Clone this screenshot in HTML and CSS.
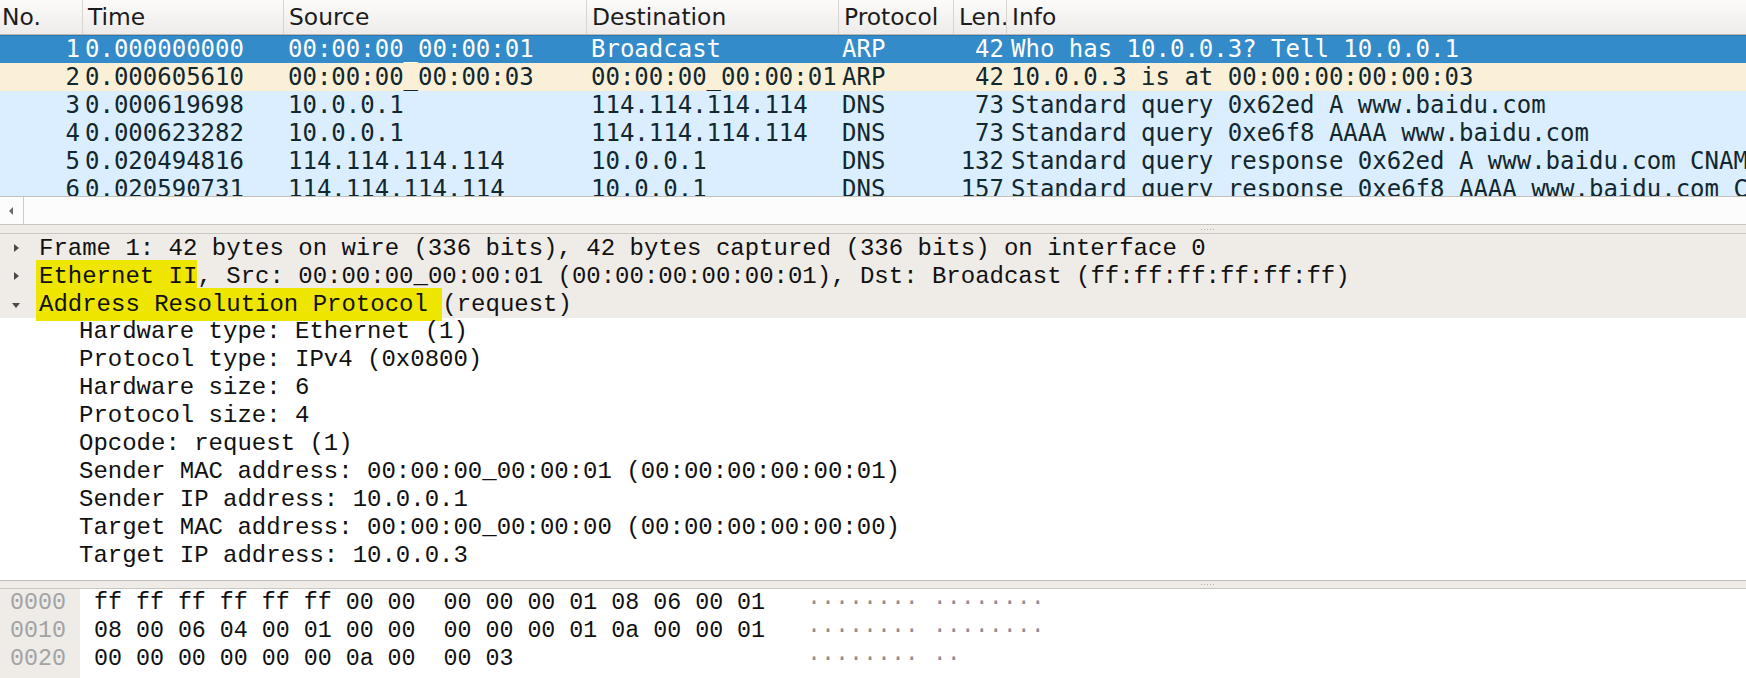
FILE: index.html
```html
<!DOCTYPE html>
<html>
<head>
<meta charset="utf-8">
<link rel="stylesheet" href="styles.css">
</head>
<body>
<div class="app">
  <div class="list">
    <div class="hdr">
      <div class="c c-no">No.</div>
      <div class="c c-time">Time</div>
      <div class="c c-src">Source</div>
      <div class="c c-dst">Destination</div>
      <div class="c c-proto">Protocol</div>
      <div class="c c-len">Len…</div>
      <div class="c c-info">Info</div>
    </div>
    <div class="row sel">
      <div class="c c-no">1</div><div class="c c-time">0.000000000</div><div class="c c-src">00:00:00_00:00:01</div><div class="c c-dst">Broadcast</div><div class="c c-proto">ARP</div><div class="c c-len">42</div><div class="c c-info">Who has 10.0.0.3? Tell 10.0.0.1</div>
    </div>
    <div class="row arp">
      <div class="c c-no">2</div><div class="c c-time">0.000605610</div><div class="c c-src">00:00:00_00:00:03</div><div class="c c-dst">00:00:00_00:00:01</div><div class="c c-proto">ARP</div><div class="c c-len">42</div><div class="c c-info">10.0.0.3 is at 00:00:00:00:00:03</div>
    </div>
    <div class="row udp">
      <div class="c c-no">3</div><div class="c c-time">0.000619698</div><div class="c c-src">10.0.0.1</div><div class="c c-dst">114.114.114.114</div><div class="c c-proto">DNS</div><div class="c c-len">73</div><div class="c c-info">Standard query 0x62ed A www.baidu.com</div>
    </div>
    <div class="row udp">
      <div class="c c-no">4</div><div class="c c-time">0.000623282</div><div class="c c-src">10.0.0.1</div><div class="c c-dst">114.114.114.114</div><div class="c c-proto">DNS</div><div class="c c-len">73</div><div class="c c-info">Standard query 0xe6f8 AAAA www.baidu.com</div>
    </div>
    <div class="row udp">
      <div class="c c-no">5</div><div class="c c-time">0.020494816</div><div class="c c-src">114.114.114.114</div><div class="c c-dst">10.0.0.1</div><div class="c c-proto">DNS</div><div class="c c-len">132</div><div class="c c-info">Standard query response 0x62ed A www.baidu.com CNAME www.a.shifen.com A 14.215.177.39</div>
    </div>
    <div class="row udp">
      <div class="c c-no">6</div><div class="c c-time">0.020590731</div><div class="c c-src">114.114.114.114</div><div class="c c-dst">10.0.0.1</div><div class="c c-proto">DNS</div><div class="c c-len">157</div><div class="c c-info">Standard query response 0xe6f8 AAAA www.baidu.com CNAME www.a.shifen.com</div>
    </div>
  </div>
  <div class="hscroll">
    <div class="arrow-btn"><span class="tri-left"></span></div>
  </div>
  <div class="splitter"><span class="grip"></span></div>
  <div class="tree">
    <div class="trow top"><span class="exp right"></span><span class="t">Frame 1: 42 bytes on wire (336 bits), 42 bytes captured (336 bits) on interface 0</span></div>
    <div class="trow top"><span class="exp right"></span><span class="t"><span class="hl">Ethernet II</span>, Src: 00:00:00_00:00:01 (00:00:00:00:00:01), Dst: Broadcast (ff:ff:ff:ff:ff:ff)</span></div>
    <div class="trow top"><span class="exp down"></span><span class="t"><span class="hl">Address Resolution Protocol </span>(request)</span></div>
    <div class="trow child">Hardware type: Ethernet (1)</div>
    <div class="trow child">Protocol type: IPv4 (0x0800)</div>
    <div class="trow child">Hardware size: 6</div>
    <div class="trow child">Protocol size: 4</div>
    <div class="trow child">Opcode: request (1)</div>
    <div class="trow child">Sender MAC address: 00:00:00_00:00:01 (00:00:00:00:00:01)</div>
    <div class="trow child">Sender IP address: 10.0.0.1</div>
    <div class="trow child">Target MAC address: 00:00:00_00:00:00 (00:00:00:00:00:00)</div>
    <div class="trow child">Target IP address: 10.0.0.3</div>
  </div>
  <div class="splitter hsplit"><span class="grip"></span></div>
  <div class="hex">
    <div class="offs">
      <div class="hline">0000</div>
      <div class="hline">0010</div>
      <div class="hline">0020</div>
    </div>
    <div class="bytes">
      <div class="hline">ff ff ff ff ff ff 00 00  00 00 00 01 08 06 00 01</div>
      <div class="hline">08 00 06 04 00 01 00 00  00 00 00 01 0a 00 00 01</div>
      <div class="hline">00 00 00 00 00 00 0a 00  00 03</div>
    </div>
    <div class="ascii">
      <div class="hline">········ ········</div>
      <div class="hline">········ ········</div>
      <div class="hline">········ ··</div>
    </div>
  </div>
</div>
</body>
</html>
```
FILE: styles.css
```css
html, body {
  margin: 0;
  padding: 0;
  background: #ffffff;
}
.app {
  width: 1746px;
  height: 678px;
  overflow: hidden;
  display: flex;
  flex-direction: column;
}
.list {
  height: 197px;
  flex: none;
  overflow: hidden;
  border-bottom: 1px solid #c4c0bb;
  box-sizing: border-box;
  background: #ffffff;
}
.hdr {
  display: flex;
  height: 35px;
  box-sizing: border-box;
  background: linear-gradient(#fcfbfa, #eeecea);
  border-bottom: 1px solid #bdb9b4;
  font-family: "DejaVu Sans", sans-serif;
  font-size: 23.4px;
  color: #1c1c1c;
  line-height: 34px;
}
.hdr .c {
  border-right: 1px solid #d8d5d1;
  padding-left: 5px;
  overflow: hidden;
}
.hdr .c-no { padding-left: 2px; }
.c {
  flex: none;
  box-sizing: border-box;
  overflow-x: clip;
  overflow-y: visible;
  white-space: pre;
}
.c-no { width: 83px; }
.c-time { width: 201px; }
.c-src { width: 303px; }
.c-dst { width: 252px; }
.c-proto { width: 115px; }
.c-len { width: 53px; }
.c-info { flex: 1 1 auto; width: 0; border-right: none !important; }
.row {
  display: flex;
  height: 28px;
  line-height: 28px;
  font-family: "DejaVu Sans Mono", monospace;
  font-size: 24px;
  color: #12272e;
}
.row .c { padding-left: 4px; }
.row .c-no, .row .c-len { text-align: right; padding-left: 0; padding-right: 3px; }
.row .c-time { padding-left: 2px; }
.row .c-proto { padding-left: 3px; }
.row.sel {
  background: #338bc9;
  color: #ffffff;
  box-shadow: inset 0 1px 0 #2b77b0;
  position: relative;
  z-index: 1;
}
.row.arp { background: #faf0d7; }
.row.udp { background: #daeeff; }
.hscroll {
  height: 28px;
  flex: none;
  box-sizing: border-box;
  background: #fcfcfc;
  border-bottom: 1px solid #c7c3be;
  display: flex;
}
.arrow-btn {
  width: 23px;
  border-right: 1px solid #cfcbc6;
  display: flex;
  align-items: center;
  justify-content: center;
}
.tri-left {
  width: 0;
  height: 0;
  border-top: 4px solid transparent;
  border-bottom: 4px solid transparent;
  border-right: 4px solid #6a6a6a;
  margin-right: 2px;
}
.splitter {
  height: 9px;
  flex: none;
  background: #efebe7;
  box-sizing: border-box;
  border-bottom: 1px solid #cbc7c2;
  display: flex;
  align-items: center;
  padding-left: 1200px;
}
.hsplit {
  border-top: 1px solid #bfbbb6;
}
.grip {
  width: 16px;
  height: 1px;
  background-image: radial-gradient(circle, #b5b1ab 45%, transparent 55%);
  background-size: 3px 1px;
}
.tree {
  height: 346px;
  flex: none;
  box-sizing: border-box;
  background: #ffffff;
  font-family: "Liberation Mono", monospace;
  font-size: 24px;
  color: #111111;
  overflow: hidden;
}
.trow {
  height: 28px;
  line-height: 30px;
  white-space: pre;
  display: flex;
  align-items: center;
}
.trow.top {
  background: #efebe7;
}
.trow.child { padding-left: 79px; }
.exp {
  width: 39px;
  height: 28px;
  flex: none;
  display: flex;
  align-items: center;
  justify-content: flex-start;
  box-sizing: border-box;
}
.exp.right::before {
  content: "";
  margin-left: 14px;
  border-top: 4px solid transparent;
  border-bottom: 4px solid transparent;
  border-left: 5px solid #4a4a4a;
}
.exp.down::before {
  content: "";
  margin-left: 12px;
  margin-top: 2px;
  border-left: 4px solid transparent;
  border-right: 4px solid transparent;
  border-top: 5px solid #4a4a4a;
}
.trow .t { display: block; line-height: 28px; padding-top: 1px; }
.hl {
  background: #eee600;
  padding: 3px 0 3px 3px;
  margin-left: -3px;
}
.hex {
  flex: 1 1 auto;
  display: flex;
  font-family: "Liberation Mono", monospace;
  font-size: 23.3px;
  background: #ffffff;
}
.hline {
  height: 28px;
  line-height: 29px;
  white-space: pre;
}
.offs {
  width: 80px;
  flex: none;
  background: #efebe7;
  color: #a3a3a3;
  padding-left: 10px;
  box-sizing: border-box;
}
.bytes {
  width: 713px;
  flex: none;
  margin-left: 14px;
  color: #111111;
}
.ascii {
  color: #8e8e8e;
}
```
